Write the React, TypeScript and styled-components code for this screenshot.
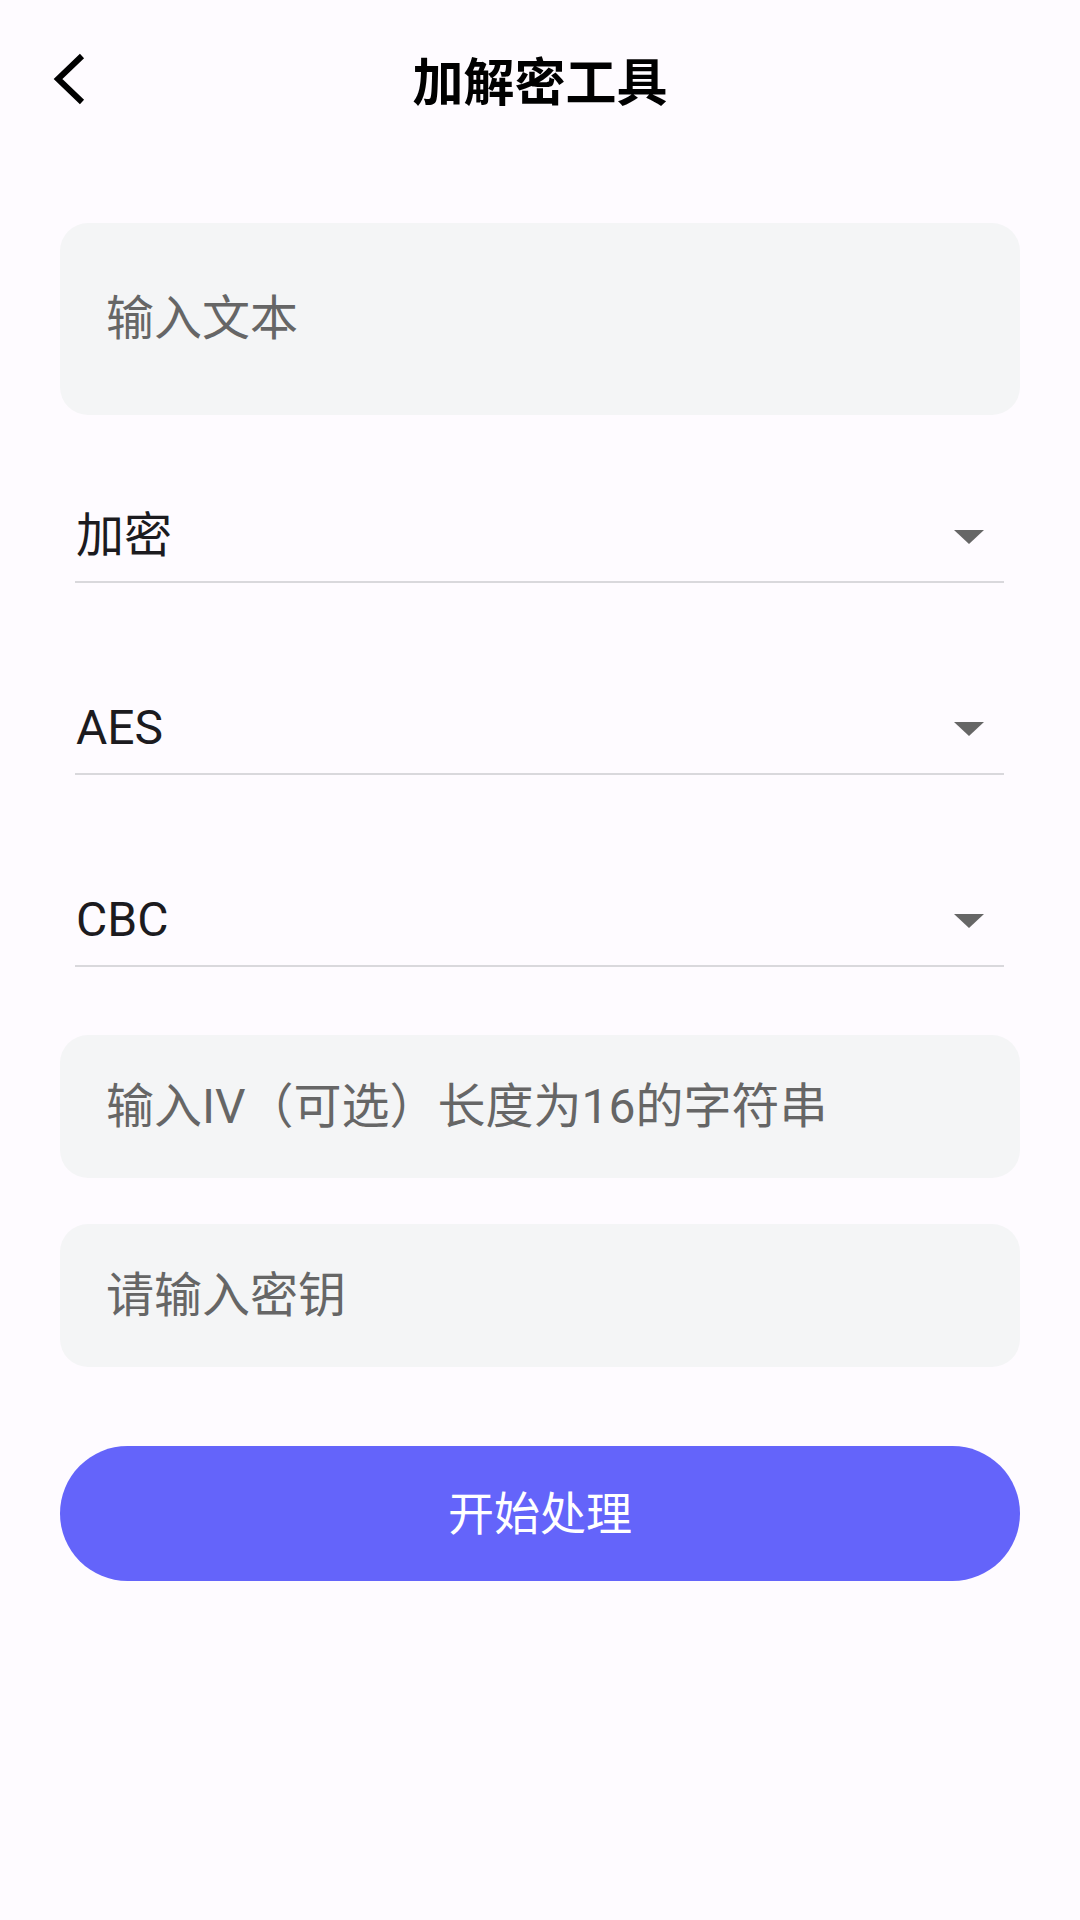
import React from "react";
import styled, { createGlobalStyle } from "styled-components";

const GlobalStyle = createGlobalStyle`
  html, body {
    margin: 0;
    padding: 0;
    background: #fefbff;
  }
  body {
    font-family: Roboto, "Noto Sans CJK SC", sans-serif;
  }
  * {
    box-sizing: border-box;
  }
`;

const Screen = styled.div`
  width: 1080px;
  min-height: 1920px;
  background: #fefbff;
  display: flex;
  flex-direction: column;
`;

const TopBar = styled.header`
  height: 158px;
  display: grid;
  grid-template-columns: 200px 1fr 200px;
  align-items: center;
`;

const BackButton = styled.button`
  justify-self: start;
  margin-left: 53px;
  padding: 0;
  border: none;
  background: transparent;
  width: 34px;
  height: 52px;
  display: flex;
  align-items: center;
  justify-content: flex-start;
  cursor: pointer;
`;

const Title = styled.h1`
  margin: 0;
  text-align: center;
  font-family: "Noto Sans CJK SC", sans-serif;
  font-weight: 700;
  font-size: 51px;
  line-height: 1;
  color: #000000;
`;

const Form = styled.main`
  display: flex;
  flex-direction: column;
  padding: 65px 60px 0;
`;

const TextBox = styled.div<{ $h: number; $top?: number }>`
  height: ${(p) => p.$h}px;
  margin-top: ${(p) => p.$top ?? 0}px;
  background: #f4f5f6;
  border-radius: 28px;
  display: flex;
  align-items: center;
  padding-left: 46px;
  font-size: 48px;
  color: #666666;
  line-height: 1;
`;

const SelectRow = styled.div<{ $top: number }>`
  margin: ${(p) => p.$top}px 16px 0 15px;
  height: 100px;
  border-bottom: 2px solid #d9d8dc;
  display: flex;
  align-items: center;
  justify-content: space-between;
  padding: 7px 20px 0 1px;
  font-size: 48px;
  line-height: 1;
  color: #1c1b1f;
`;

const Caret = styled.span`
  width: 0;
  height: 0;
  border-left: 15px solid transparent;
  border-right: 15px solid transparent;
  border-top: 14px solid #666666;
  margin-top: 2px;
`;

const SubmitButton = styled.button`
  margin-top: 79px;
  height: 135px;
  border: none;
  border-radius: 68px;
  background: #6464fa;
  color: #ffffff;
  font-family: Roboto, "Noto Sans CJK SC", sans-serif;
  font-size: 46px;
  line-height: 1;
  cursor: pointer;
`;

const Select: React.FC<{ value: string; top: number }> = ({ value, top }) => (
  <SelectRow $top={top}>
    <span>{value}</span>
    <Caret />
  </SelectRow>
);

export default function App() {
  return (
    <Screen>
      <GlobalStyle />
      <TopBar>
        <BackButton aria-label="返回">
          <svg width="32" height="52" viewBox="0 0 32 52">
            <polyline
              points="29,3 5,26 29,49"
              fill="none"
              stroke="#000"
              strokeWidth="6"
              strokeLinejoin="miter"
            />
          </svg>
        </BackButton>
        <Title>加解密工具</Title>
        <span />
      </TopBar>
      <Form>
        <TextBox $h={192}>输入文本</TextBox>
        <Select value="加密" top={68} />
        <Select value="AES" top={92} />
        <Select value="CBC" top={92} />
        <TextBox $h={143} $top={68}>输入IV（可选）长度为16的字符串</TextBox>
        <TextBox $h={143} $top={46}>请输入密钥</TextBox>
        <SubmitButton>开始处理</SubmitButton>
      </Form>
    </Screen>
  );
}
